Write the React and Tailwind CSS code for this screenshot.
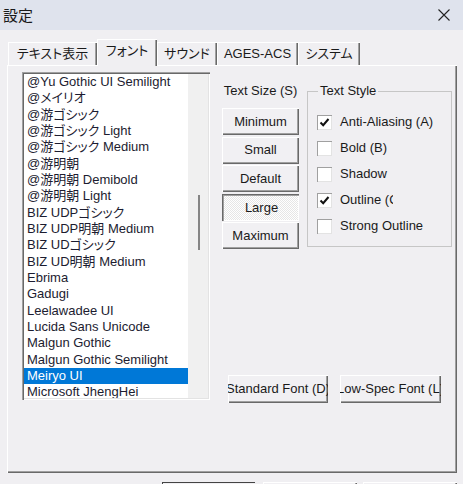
import React from 'react';

const fonts = [
    '@Yu Gothic UI Semilight',
    '@メイリオ',
    '@游ゴシック',
    '@游ゴシック Light',
    '@游ゴシック Medium',
    '@游明朝',
    '@游明朝 Demibold',
    '@游明朝 Light',
    'BIZ UDPゴシック',
    'BIZ UDP明朝 Medium',
    'BIZ UDゴシック',
    'BIZ UD明朝 Medium',
    'Ebrima',
    'Gadugi',
    'Leelawadee UI',
    'Lucida Sans Unicode',
    'Malgun Gothic',
    'Malgun Gothic Semilight',
    'Meiryo UI',
    'Microsoft JhengHei',
];

const tabs = [
    { label: 'テキスト表示', w: 'w-[89px]' },
    { label: 'フォント', w: 'w-[60px]', active: true },
    { label: 'サウンド', w: 'w-[60px]' },
    { label: 'AGES-ACS', w: 'w-[81px]' },
    { label: 'システム', w: 'w-[62px]' },
];

const sizes = ['Minimum', 'Small', 'Default', 'Large', 'Maximum'];

const styles = [
    { label: 'Anti-Aliasing (A)', checked: true, cover: true },
    { label: 'Bold (B)' },
    { label: 'Shadow' },
    { label: 'Outline (O)', checked: true, clip: true },
    { label: 'Strong Outline' },
];

const raised = 'shadow-[inset_1px_1px_0_#ffffff,inset_-1px_-1px_0_#696969,inset_-2px_-2px_0_#a0a0a0]';
const pressed = 'shadow-[inset_1px_1px_0_#696969,inset_2px_2px_0_#a0a0a0,inset_-1px_-1px_0_#ffffff]';

const Checkbox = ({ checked }) => (
    <div className="w-[15px] h-[15px] bg-white shrink-0 flex items-center justify-center shadow-[inset_1px_1px_0_#a0a0a0,inset_-1px_-1px_0_#e3e3e3]">
        {checked && (
            <svg width="11" height="11" viewBox="0 0 11 11">
                <path d="M1.5 5.5 L4.2 8.2 L9.5 2" fill="none" stroke="#111" strokeWidth="2" />
            </svg>
        )}
    </div>
);

export default function App() {
    return (
        <div className="w-[463px] h-[484px] overflow-hidden bg-[#f0eff2] text-[13px] text-[#1a1a1a] font-['Liberation_Sans','Noto_Sans_CJK_JP',sans-serif] [font-feature-settings:'palt']">
            {/* title bar */}
            <div className="h-[30px] bg-[#dfe3ed] flex items-center justify-between pl-[3px] pr-[13px]">
                <span className="text-[15px] font-['Noto_Sans_CJK_JP',sans-serif]">設定</span>
                <svg width="12" height="12" viewBox="0 0 12 12">
                    <path d="M0.5 0.5 L11.5 11.5 M11.5 0.5 L0.5 11.5" stroke="#222" strokeWidth="1.1" />
                </svg>
            </div>

            {/* tabs */}
            <div className="h-[35px] flex items-end pl-[8px]">
                {tabs.map(t => (
                    <div
                        key={t.label}
                        className={`${t.w} flex items-center justify-center whitespace-nowrap ${
                            t.active
                                ? 'h-[27px] pb-[3px] relative z-10 bg-[#f0eff2] -mb-px shadow-[inset_1px_1px_0_#ffffff,inset_-1px_0_0_#696969,inset_-2px_0_0_#a0a0a0]'
                                : 'h-[23px] shadow-[inset_1px_1px_0_#ffffff,inset_-1px_0_0_#696969,inset_-2px_0_0_#a0a0a0]'
                        }`}
                    >
                        {t.label}
                    </div>
                ))}
            </div>

            {/* panel */}
            <div className={`ml-[7px] w-[450px] h-[408px] flex items-start ${raised}`}>
                {/* font list */}
                <div className="ml-[15px] mt-[7px] w-[188px] h-[328px] p-[2px] flex shadow-[inset_1px_1px_0_#a0a0a0,inset_2px_2px_0_#696969,inset_-1px_-1px_0_#ffffff,inset_-2px_-2px_0_#e3e3e3]">
                    <div className="flex-1 bg-white overflow-hidden text-[#1c1c30]">
                        {fonts.map(f => (
                            <div
                                key={f}
                                className={`h-[16.33px] leading-[16px] pl-[3px] whitespace-nowrap ${
                                    f === 'Meiryo UI' ? 'bg-[#0078d7] text-white' : ''
                                }`}
                            >
                                {f}
                            </div>
                        ))}
                    </div>
                    <div className="w-[20px] bg-[#f0f0f0]">
                        <div className="ml-[10px] mt-[121px] w-[2px] h-[55px] bg-[#858585]" />
                    </div>
                </div>

                {/* right side */}
                <div className="ml-[12px] mt-[18px] flex flex-col">
                    <div className="flex items-start">
                        <div className="w-[77px] flex flex-col">
                            <div className="h-[16px] leading-[16px] text-center whitespace-nowrap">Text Size (S)</div>
                            <div className="mt-[9px] flex flex-col gap-[1.5px]">
                                {sizes.map(s => (
                                    <div
                                        key={s}
                                        className={`h-[27px] flex items-center justify-center ${
                                            s === 'Large'
                                                ? `${pressed} pt-[2px] pl-[2px] bg-[image:repeating-conic-gradient(#ffffff_0_25%,#e6e6e6_0_50%)] bg-[length:2px_2px]`
                                                : `${raised} bg-[#f1f0f3]`
                                        }`}
                                    >
                                        {s}
                                    </div>
                                ))}
                            </div>
                        </div>

                        <fieldset className="ml-[8px] w-[141px] h-[164px] border border-[#c6c6c6]">
                            <legend className="ml-[10px] px-[2px] leading-[16px]">Text Style</legend>
                            <div className="pt-[10px] pl-[9px]">
                                {styles.map(s => (
                                    <div
                                        key={s.label}
                                        className={`h-[26px] flex items-center ${
                                            s.cover ? 'w-[134px] relative bg-[#f0eff2]' : ''
                                        }`}
                                    >
                                        <Checkbox checked={s.checked} />
                                        <span
                                            className={`ml-[8px] whitespace-nowrap ${
                                                s.clip ? 'w-[53px] overflow-hidden' : ''
                                            }`}
                                        >
                                            {s.label}
                                        </span>
                                    </div>
                                ))}
                            </div>
                        </fieldset>
                    </div>

                    <div className="mt-[126px] ml-[6px] flex gap-[12px]">
                        <div className={`w-[100px] h-[28px] flex items-center justify-center overflow-hidden whitespace-nowrap bg-[#f1f0f3] ${raised}`}>
                            Standard Font (D)
                        </div>
                        <div className={`w-[101px] h-[28px] flex items-center justify-center overflow-hidden whitespace-nowrap bg-[#f1f0f3] ${raised}`}>
                            Low-Spec Font (L)
                        </div>
                    </div>
                </div>
            </div>

            {/* dialog buttons (cut off) */}
            <div className="mt-[9px] ml-[162px] flex">
                <div className="w-[93px] h-[24px] border-t border-l border-[#444] bg-[#f1f0f3]" />
                <div className={`ml-[8px] w-[94px] h-[24px] bg-[#f1f0f3] ${raised}`} />
                <div className={`ml-[6px] w-[94px] h-[24px] bg-[#f1f0f3] ${raised}`} />
            </div>
        </div>
    );
}
